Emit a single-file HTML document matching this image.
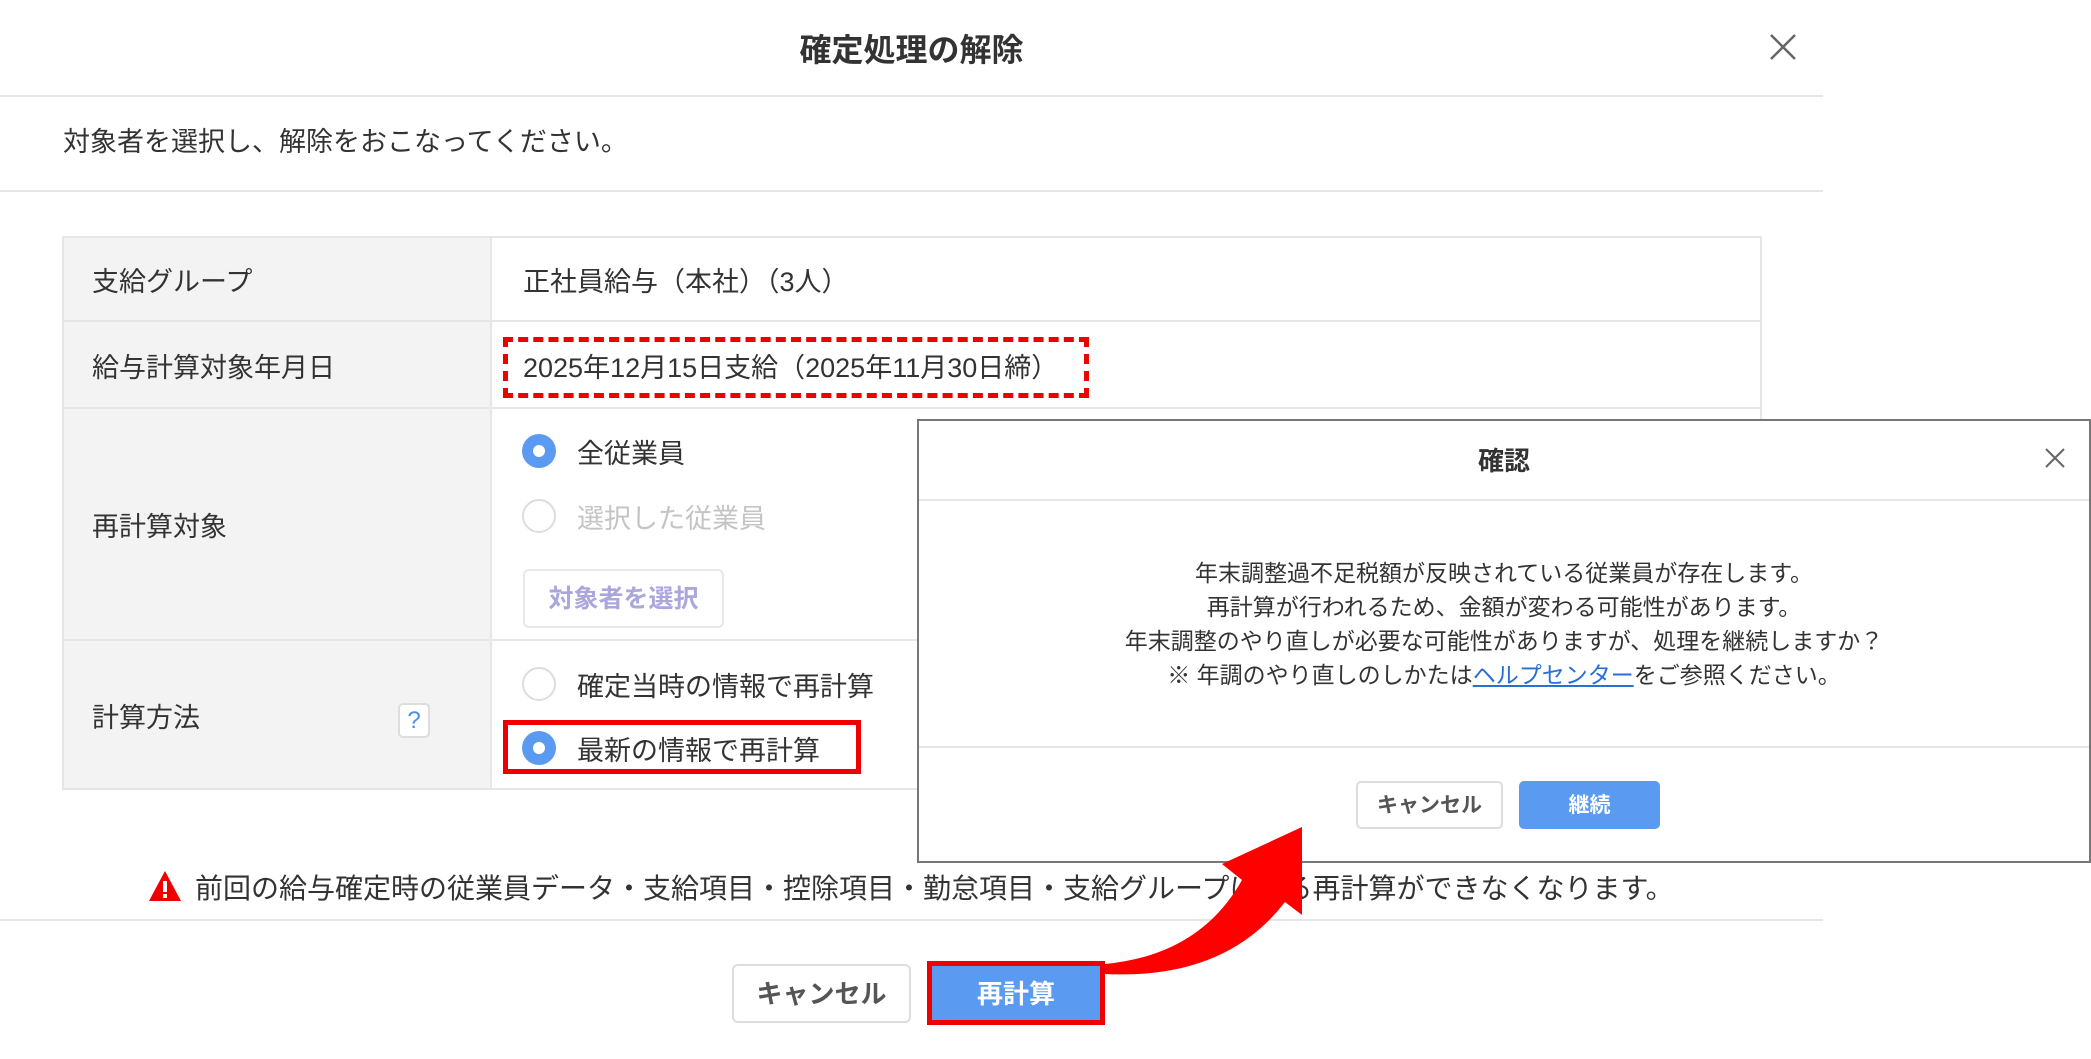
<!DOCTYPE html>
<html><head><meta charset="utf-8"><style>
*{margin:0;padding:0;box-sizing:border-box}
body{width:2091px;height:1059px;position:relative;overflow:hidden;background:#fff;font-family:"Liberation Sans","Noto Sans CJK JP",sans-serif;color:#333}
.a{position:absolute;white-space:nowrap}
.hl{position:absolute;height:2px;background:#e6e6e6}
.t{font-size:27px;line-height:30px}
.radio{position:absolute;width:34px;height:34px;border-radius:50%}
.on{background:#5a9af0}
.on::after{content:"";position:absolute;left:11px;top:11px;width:12px;height:12px;border-radius:50%;background:#fff}
.off{border:2px solid #ddd;background:#fff}
</style></head><body>
<div class="a" style="left:0;top:0;width:1823px;height:1059px;background:#fff"></div>
<div class="a" style="left:0;top:31px;width:1823px;text-align:center;font-size:32px;font-weight:bold;line-height:38px">確定処理の解除</div>
<svg class="a" style="left:1769px;top:33px" width="28" height="28" viewBox="0 0 28 28"><path d="M2 2L26 26M26 2L2 26" stroke="#666" stroke-width="2.5"/></svg>
<div class="hl" style="left:0;top:95px;width:1823px"></div>
<div class="a t" style="left:63px;top:127px">対象者を選択し、解除をおこなってください。</div>
<div class="hl" style="left:0;top:190px;width:1823px"></div>

<div class="a" style="left:62px;top:236px;width:1700px;height:554px;border:2px solid #e6e6e6"></div>
<div class="a" style="left:64px;top:238px;width:428px;height:550px;background:#f3f3f3;border-right:2px solid #e6e6e6"></div>
<div class="hl" style="left:64px;top:320px;width:1696px"></div>
<div class="hl" style="left:64px;top:407px;width:1696px"></div>
<div class="hl" style="left:64px;top:639px;width:1696px"></div>

<div class="a t" style="left:92px;top:267px">支給グループ</div>
<div class="a t" style="left:523px;top:267px">正社員給与（本社）（3人）</div>
<div class="a t" style="left:92px;top:353px">給与計算対象年月日</div>
<div class="a t" style="left:523px;top:353px">2025年12月15日支給（2025年11月30日締）</div>
<div class="a" style="left:503px;top:337px;width:586px;height:61px;border:5px dashed #e00"></div>

<div class="a t" style="left:92px;top:512px">再計算対象</div>
<div class="radio on" style="left:522px;top:434px"></div>
<div class="a t" style="left:577px;top:439px">全従業員</div>
<div class="radio off" style="left:522px;top:499px"></div>
<div class="a t" style="left:577px;top:504px;color:#c4c4c4">選択した従業員</div>
<div class="a" style="left:523px;top:569px;width:201px;height:59px;border:2px solid #e8e8e8;border-radius:6px;color:#aba6dc;font-size:25px;text-align:center;line-height:57px;font-weight:bold">対象者を選択</div>

<div class="a t" style="left:92px;top:703px">計算方法</div>
<div class="a" style="left:398px;top:703px;width:32px;height:35px;border:2px solid #ddd;border-radius:5px;background:#fff;color:#4a8ef0;font-size:24px;text-align:center;line-height:31px">?</div>
<div class="radio off" style="left:522px;top:667px"></div>
<div class="a t" style="left:577px;top:672px">確定当時の情報で再計算</div>
<div class="a" style="left:503px;top:720px;width:358px;height:54px;border:5px solid #e00"></div>
<div class="radio on" style="left:522px;top:731px"></div>
<div class="a t" style="left:577px;top:736px">最新の情報で再計算</div>

<svg class="a" style="left:148px;top:870px" width="34" height="32" viewBox="0 0 34 32"><path d="M17 1L33 31H1Z" fill="#e00"/><rect x="15" y="11" width="4" height="11" fill="#fff"/><rect x="15" y="24" width="4" height="4" fill="#fff"/></svg>
<div class="a t" style="left:195px;top:874px;font-size:28px">前回の給与確定時の従業員データ・支給項目・控除項目・勤怠項目・支給グループによる再計算ができなくなります。</div>
<div class="hl" style="left:0;top:919px;width:1823px"></div>

<div class="a" style="left:732px;top:964px;width:179px;height:59px;border:2px solid #ddd;border-radius:6px;font-size:26px;font-weight:bold;color:#555;text-align:center;line-height:57px">キャンセル</div>
<div class="a" style="left:927px;top:961px;width:178px;height:64px;border:5px solid #e00;background:#5a9af0;color:#fff;font-size:26px;font-weight:bold;text-align:center;line-height:56px">再計算</div>

<div class="a" style="left:917px;top:419px;width:1174px;height:444px;border:2px solid #777;background:#fff"></div>
<div class="a" style="left:919px;top:445px;width:1170px;text-align:center;font-size:26px;font-weight:bold;line-height:32px">確認</div>
<svg class="a" style="left:2044px;top:447px" width="22" height="22" viewBox="0 0 22 22"><path d="M2 2L20 20M20 2L2 20" stroke="#666" stroke-width="2"/></svg>
<div class="hl" style="left:919px;top:499px;width:1170px"></div>
<div class="a" style="left:919px;top:556px;width:1170px;text-align:center;font-size:23px;line-height:34px;color:#333">年末調整過不足税額が反映されている従業員が存在します。<br>再計算が行われるため、金額が変わる可能性があります。<br>年末調整のやり直しが必要な可能性がありますが、処理を継続しますか？<br>※ 年調のやり直しのしかたは<span style="color:#2a6fd6;text-decoration:underline">ヘルプセンター</span>をご参照ください。</div>
<div class="hl" style="left:919px;top:746px;width:1170px"></div>
<div class="a" style="left:1356px;top:781px;width:147px;height:48px;border:2px solid #ddd;border-radius:5px;font-size:21px;font-weight:bold;color:#555;text-align:center;line-height:46px">キャンセル</div>
<div class="a" style="left:1519px;top:781px;width:141px;height:48px;border-radius:5px;background:#5a9af0;color:#fff;font-size:21px;font-weight:bold;text-align:center;line-height:50px">継続</div>

<svg class="a" style="left:0;top:0" width="2091" height="1059"><path d="M1105,964 Q1200,955 1242,880 L1222,864 L1302,827 L1302,915 L1285,902 Q1225,980 1105,974 Z" fill="#f00"/></svg>
</body></html>
